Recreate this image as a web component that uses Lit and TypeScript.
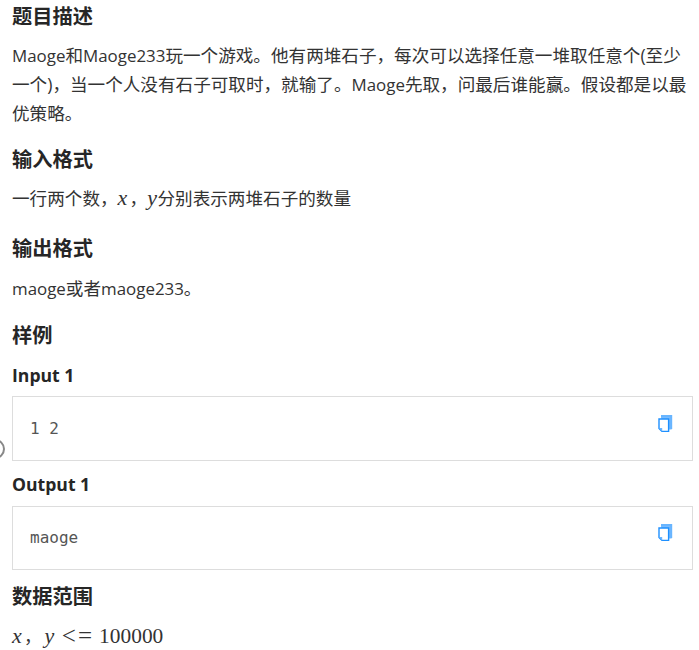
import { LitElement, html, css } from "lit";
import { customElement } from "lit/decorators.js";

const copyIcon = html`<svg class="copy" viewBox="0 0 15 17" width="15" height="17" fill="none">
  <path d="M3 1h10.2v13" stroke="#69b5ff" stroke-width="2"/>
  <path d="M11 14.5H13.6V0.6H3V3" fill="#69b5ff" opacity="0.9"/>
  <path d="M1 4h9.6v12.4H4L1 13.4z" fill="#fff" stroke="#1e90ff" stroke-width="1.4"/>
  <path d="M1 13h3.2v3.4z" fill="#69b5ff"/>
</svg>`;

@customElement("app-root")
export class AppRoot extends LitElement {
  static styles = css`
    :host {
      display: block;
      position: relative;
      width: 699px;
      height: 650px;
      overflow: hidden;
      background: #fff;
      color: #333;
      font-family: "Open Sans", "Noto Sans CJK SC", sans-serif;
      font-size: 17.6px;
      box-sizing: border-box;
      padding: 3px 6px 0 12px;
    }
    h2 {
      margin: 0;
      font-size: 20.24px;
      line-height: 26px;
      font-weight: 700;
      color: #262626;
    }
    p {
      margin: 0;
      line-height: 28px;
      white-space: nowrap;
    }
    .ln { display: block; }
    .l { font-size: 16.9px; }
    .desc { margin-top: 12px; }
    .sec2 { margin-top: 19px; }
    .sec3 { margin-top: 23px; }
    .sec4 { margin-top: 19px; }
    .sec5 { margin-top: 13px; }
    .one { margin-top: 12px; }
    .out { margin-top: 13px; }
    .last { margin-top: 13px; }
    h3 {
      margin: 0;
      font-size: 17.6px;
      line-height: 24px;
      font-weight: 700;
      color: #262626;
    }
    .h-in { margin-top: 15px; }
    .h-out { margin-top: 11px; }
    .box {
      display: flex;
      justify-content: space-between;
      align-items: flex-start;
      box-sizing: border-box;
      height: 65px;
      margin-top: 9px;
      border: 1px solid #ddd;
      padding: 18px 19px 0 17px;
    }
    .box.b2 { height: 64px; margin-top: 10px; padding-top: 17px; }
    code {
      font-family: "DejaVu Sans Mono", monospace;
      font-size: 16px;
      line-height: 28px;
      color: #555;
    }
    .copy { display: block; }
    .m {
      display: inline-block;
      font-family: "Liberation Serif", serif;
      font-style: italic;
      font-size: 22px;
      line-height: 20px;
      color: #333;
    }
    .x { width: 12px; }
    .y { width: 10.3px; }
    .gap { margin-left: 3px; }
    .num { font-family: "Liberation Serif", serif; font-size: 21.4px; color: #333; }
    .rel {
      display: inline-block;
      width: 16.3px;
      text-align: center;
      vertical-align: -1px;
      font-family: "Liberation Serif", serif;
      font-size: 25px;
      line-height: 20px;
      color: #333;
    }
    .rels { margin: 0 5.8px; }
    .ring {
      position: absolute;
      left: -15px;
      top: 439px;
      width: 16px;
      height: 16px;
      border: 2px solid #888;
      border-radius: 50%;
    }
  `;

  render() {
    return html`
      <h2>题目描述</h2>
      <p class="desc">
        <span class="ln"><span class="l">Maoge</span>和<span class="l">Maoge233</span>玩一个游戏。他有两堆石子，每次可以选择任意一堆取任意个(至少</span>
        <span class="ln">一个)，当一个人没有石子可取时，就输了。<span class="l">Maoge</span>先取，问最后谁能赢。假设都是以最</span>
        <span class="ln">优策略。</span>
      </p>
      <h2 class="sec2">输入格式</h2>
      <p class="one">一行两个数，<span class="m x">x</span>，<span class="m y">y</span>分别表示两堆石子的数量</p>
      <h2 class="sec3">输出格式</h2>
      <p class="out"><span class="l">maoge</span>或者<span class="l">maoge233</span>。</p>
      <h2 class="sec4">样例</h2>
      <h3 class="h-in">Input 1</h3>
      <div class="box"><code>1 2</code>${copyIcon}</div>
      <h3 class="h-out">Output 1</h3>
      <div class="box b2"><code>maoge</code>${copyIcon}</div>
      <h2 class="sec5">数据范围</h2>
      <p class="last"><span class="m x">x</span>，<span class="m y gap">y</span><span class="rels"><span class="rel">&lt;</span><span class="rel">=</span></span><span class="num">100000</span></p>
      <div class="ring"></div>
    `;
  }
}
